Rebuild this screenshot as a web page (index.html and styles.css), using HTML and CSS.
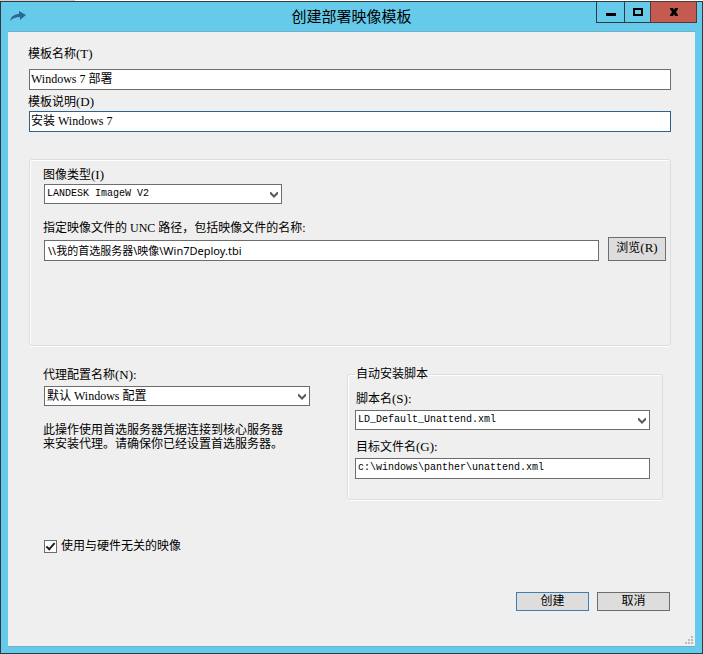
FILE: index.html
```
<!DOCTYPE html>
<html lang="zh-CN">
<head>
  <meta charset="UTF-8">
  <meta name="viewport" content="width=device-width, initial-scale=1.0">
  <title>创建部署映像模板</title>
  <link rel="stylesheet" href="styles.css">
</head>
<body>
  <div class="backdrop"></div>
  <div class="window">
    <header class="titlebar">
      <svg class="app-icon" width="18" height="12" viewBox="0 0 18 12">
        <path d="M1 10 C2 5 6 3 10 3 V0 L17 4 L11 9 V6 C7 6 4 7 1 10 Z" fill="#2e6596"/>
      </svg>
      <h1>创建部署映像模板</h1>
      <div class="window-controls">
        <button type="button" class="win-btn" aria-label="最小化">
          <svg width="10" height="10" viewBox="0 0 10 10"><path d="M0 6h10v3H0z"/></svg>
        </button>
        <button type="button" class="win-btn" aria-label="最大化">
          <svg width="10" height="10" viewBox="0 0 10 10"><path d="M0 1h10v8H0zM2 3v4h6V3z" fill-rule="evenodd"/></svg>
        </button>
        <button type="button" class="win-btn close" aria-label="关闭">
          <svg width="10" height="10" viewBox="0 0 10 10"><path d="M1 1h3l1 2 1-2h3v1L7 5l2 3v1H6L5 7 4 9H1V8l2-3-2-3z"/></svg>
        </button>
      </div>
    </header>

    <form class="content">
      <label class="first-label" for="tplName">模板名称<span class="key">(T)</span></label>
      <input class="field" id="tplName" type="text" value="Windows 7 部署">
      <label class="next-label" for="tplDesc">模板说明<span class="key">(D)</span></label>
      <input class="field active" id="tplDesc" type="text" value="安装 Windows 7">

      <fieldset class="group image-group">
        <label for="imageType">图像类型<span class="key">(I)</span></label>
        <div class="select image-type">
          <select class="latin" id="imageType"><option>LANDESK ImageW V2</option></select>
          <svg width="8" height="6" viewBox="0 0 8 6"><path d="M0 0h1l3 3 3-3h1v2L4 6 0 2z"/></svg>
        </div>
        <label class="path-label" for="uncPath">指定映像文件的 UNC 路径，包括映像文件的名称:</label>
        <div class="path-row">
          <input class="field path" id="uncPath" type="text" value="\\我的首选服务器\映像\Win7Deploy.tbi">
          <button type="button" class="btn browse">浏览<span class="key">(R)</span></button>
        </div>
      </fieldset>

      <div class="columns">
        <div class="agent">
          <label for="agentConfig">代理配置名称<span class="key">(N):</span></label>
          <div class="select">
            <select id="agentConfig"><option>默认 Windows 配置</option></select>
            <svg width="8" height="6" viewBox="0 0 8 6"><path d="M0 0h1l3 3 3-3h1v2L4 6 0 2z"/></svg>
          </div>
          <p class="note">此操作使用首选服务器凭据连接到核心服务器<br>来安装代理。请确保你已经设置首选服务器。</p>
        </div>

        <fieldset class="group script-group">
          <legend>自动安装脚本</legend>
          <label for="scriptName">脚本名<span class="key">(S):</span></label>
          <div class="select">
            <select class="latin" id="scriptName"><option>LD_Default_Unattend.xml</option></select>
            <svg width="8" height="6" viewBox="0 0 8 6"><path d="M0 0h1l3 3 3-3h1v2L4 6 0 2z"/></svg>
          </div>
          <label class="target-label" for="targetFile">目标文件名<span class="key">(G):</span></label>
          <input class="field latin" id="targetFile" type="text" value="c:\windows\panther\unattend.xml">
        </fieldset>
      </div>

      <div class="check-row">
        <input id="hwFree" type="checkbox" checked>
        <label for="hwFree">使用与硬件无关的映像</label>
      </div>

      <div class="actions">
        <button type="submit" class="btn primary">创建</button>
        <button type="button" class="btn">取消</button>
      </div>

      <svg class="grip" width="8" height="8" viewBox="0 0 8 8">
        <path d="M6 0h2v2H6zM3 3h2v2H3zM6 3h2v2H6zM0 6h2v2H0zM3 6h2v2H3zM6 6h2v2H6z"/>
      </svg>
    </form>
  </div>
</body>
</html>
```
FILE: styles.css
```
* {
  margin: 0;
  padding: 0;
  box-sizing: border-box;
}

body {
  display: flex;
  flex-direction: column;
  min-height: 100vh;
  font-family: "Liberation Serif", "Noto Sans CJK SC", serif;
  font-size: 12px;
  line-height: 16px;
  color: #000;
}

input,
select,
button {
  font: inherit;
  color: inherit;
  border-radius: 0;
}

/* 后面窗口露出的一条边 */
.backdrop {
  height: 1px;
  background: linear-gradient(90deg, #d4d4d4 75px, #fff 75px);
}

.window {
  flex: 1;
  display: flex;
  flex-direction: column;
  padding: 0 7px 6px;
  border: 1px solid #303a40;
  background: #66caea;
}

.titlebar {
  display: grid;
  grid-template-columns: 1fr auto 1fr;
  height: 30px;
  border-bottom: 1px solid #6fb0cc;
}

.app-icon {
  margin: 9px 0 0 1px;
}

.titlebar h1 {
  font-family: "Noto Sans CJK SC", sans-serif;
  font-size: 15px;
  font-weight: 400;
  line-height: 28px;
}

.window-controls {
  display: flex;
  justify-content: flex-end;
  margin: -1px -2px 0 0;
}

.win-btn {
  width: 29px;
  height: 22px;
  margin-left: -1px;
  border: 1px solid #303a40;
  background: #66caea;
}

.win-btn + .win-btn {
  width: 27px;
}

.win-btn svg {
  display: block;
  margin: 0 auto;
}

.win-btn.close {
  width: 47px;
  border-color: #5a3534;
  background: #c45a50;
}

.content {
  position: relative;
  flex: 1;
  display: flex;
  flex-direction: column;
  padding: 13px 24px 35px 21px;
  border-bottom: 1px solid #6fb0cc;
  background: #efefef;
}

label {
  display: block;
  margin-left: -1px;
  line-height: 18px;
}

.key {
  font-size: 13px;
  line-height: 1;
}

.field {
  width: 100%;
  height: 21px;
  padding: 0 1px 3px;
  border: 1px solid #6d6d6d;
  background: #fff;
  outline: none;
}

.field.active {
  border-color: #2c628b;
}

.first-label {
  margin-bottom: 6px;
}

.next-label {
  margin-top: 3px;
}

.latin {
  font-family: "Liberation Mono", monospace;
  font-size: 10px;
}

.field.latin {
  padding-left: 2px;
}

.select {
  position: relative;
}

.select select {
  display: block;
  width: 100%;
  height: 20px;
  padding: 0 20px 0 2px;
  border: 1px solid #6d6d6d;
  background: #fff;
  appearance: none;
  outline: none;
}

.select svg {
  position: absolute;
  top: 8px;
  right: 4px;
  fill: #5a5a5a;
  pointer-events: none;
}

.group {
  min-width: 0;
  border: 1px solid #d5dfe5;
  border-radius: 3px;
  box-shadow: inset 1px 1px #fff, 0 1px #fff;
}

.image-group {
  margin-top: 27px;
  padding: 6px 4px 84px 14px;
}

.image-type {
  width: 238px;
}

.path-label {
  margin-top: 15px;
}

.path-row {
  display: flex;
  align-items: flex-end;
  gap: 9px;
}

.path {
  flex: 1;
  min-width: 0;
  padding: 0 3px 1px;
  font-family: "Noto Sans", "Noto Sans CJK SC", sans-serif;
  font-size: 11px;
}

.btn {
  width: 73px;
  height: 19px;
  padding-bottom: 2px;
  border: 1px solid #6d6d6d;
  background: #dddddd;
}

.btn.browse {
  width: 58px;
  height: 24px;
}

.btn.primary {
  border-color: #3c7fb1;
}

.columns {
  display: flex;
  justify-content: space-between;
  padding: 20px 8px 0 15px;
}

.agent {
  flex: 0 1 266px;
}

.agent .select {
  margin-top: 2px;
}

.note {
  margin: 17px -10px 0 -1px;
  line-height: 14px;
}

.script-group {
  flex: 0 1 316px;
  padding: 8px 12px 20px 7px;
}

.script-group legend {
  padding: 0 1px;
}

.script-group .select,
.script-group .field {
  margin-top: 2px;
}

.script-group label {
  margin-left: 1px;
}

.script-group .target-label {
  margin-top: 8px;
}

.check-row {
  display: flex;
  align-items: center;
  gap: 5px;
  margin: 37px 0 0 15px;
}

.check-row input {
  position: relative;
  width: 13px;
  height: 13px;
  border: 1px solid #6d6d6d;
  background: #fff;
  appearance: none;
}

/* 勾选标记 */
.check-row input:checked::after {
  content: '';
  position: absolute;
  top: 0;
  left: 3px;
  box-sizing: border-box;
  width: 5px;
  height: 9px;
  border: solid #222;
  border-width: 0 2px 2px 0;
  transform: rotate(42deg);
}

.actions {
  display: flex;
  justify-content: flex-end;
  gap: 8px;
  margin-top: auto;
  padding-right: 1px;
}

.grip {
  position: absolute;
  right: 2px;
  bottom: 2px;
  fill: #bcbcbc;
}
```
